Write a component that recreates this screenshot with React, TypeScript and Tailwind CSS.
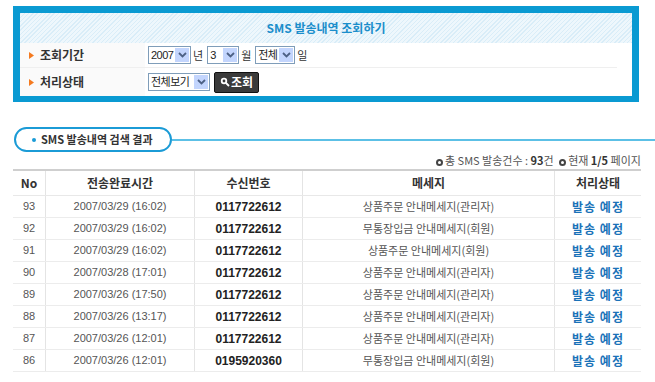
import React from "react";

const rows = [
  ["93", "2007/03/29 (16:02)", "0117722612", "상품주문 안내메세지(관리자)"],
  ["92", "2007/03/29 (16:02)", "0117722612", "무통장입금 안내메세지(회원)"],
  ["91", "2007/03/29 (16:02)", "0117722612", "상품주문 안내메세지(회원)"],
  ["90", "2007/03/28 (17:01)", "0117722612", "상품주문 안내메세지(관리자)"],
  ["89", "2007/03/26 (17:50)", "0117722612", "상품주문 안내메세지(관리자)"],
  ["88", "2007/03/26 (13:17)", "0117722612", "상품주문 안내메세지(관리자)"],
  ["87", "2007/03/26 (12:01)", "0117722612", "상품주문 안내메세지(관리자)"],
  ["86", "2007/03/26 (12:01)", "0195920360", "무통장입금 안내메세지(회원)"],
];

function Select({ value, w }: { value: string; w: string }) {
  return (
    <div className={`flex h-[18px] items-stretch border border-[#7f9db9] bg-white ${w}`}>
      <span
        className="min-w-0 flex-1 whitespace-nowrap pl-[2px] text-[11px] leading-[16px] tracking-[-0.5px] text-[#222]"
        style={{ fontFamily: '"Liberation Sans", "Noto Sans CJK KR", sans-serif' }}
      >
        {value}
      </span>
      <span className="m-[1px] flex w-[14px] shrink-0 items-center justify-center bg-[#c3d5fd]">
        <svg width="9" height="6" viewBox="0 0 9 6">
          <path d="M1 1 L4.5 4.5 L8 1" fill="none" stroke="#4d6185" strokeWidth="1.8" />
        </svg>
      </span>
    </div>
  );
}

function Bullet() {
  return (
    <svg width="5" height="7" viewBox="0 0 5 7" className="mr-[6px]">
      <path d="M0 0 L5 3.5 L0 7 Z" fill="#f47a20" />
    </svg>
  );
}

function Ring() {
  return <span className="mr-[2px] inline-block h-[7px] w-[7px] rounded-full border-2 border-[#444] align-middle" />;
}

export default function App() {
  const font = { fontFamily: '"Noto Sans CJK KR", "Liberation Sans", sans-serif' };
  const num = { fontFamily: '"Liberation Sans", sans-serif' };
  return (
    <div className="h-[382px] w-[655px] overflow-hidden bg-white" style={font}>
      {/* search box */}
      <div className="ml-[13px] mt-[6px] w-[626px] border-[7px] border-b-[6px] border-[#0a9ad2] bg-white">
        <div className="flex h-[30px] items-center justify-center bg-[repeating-linear-gradient(135deg,#d9edf8_0px,#d9edf8_1px,#eef7fc_1px,#eef7fc_3px)]">
          <span className="text-[12px] font-bold text-[#1b8ecb]">SMS 발송내역 조회하기</span>
        </div>
        <div className="mr-[15px] flex h-[25px] border-b border-[#efefef]">
          <div className="flex w-[125px] items-center bg-[#fafafa] pl-[9px] text-[12px] font-bold text-[#333]">
            <Bullet />조회기간
          </div>
          <div className="flex items-center gap-[2px] pl-[3px] text-[11px] text-[#333]">
            <Select value="2007" w="w-[43px]" />
            <span className="mr-[2px]">년</span>
            <Select value="3" w="w-[32px]" />
            <span className="mr-[2px]">월</span>
            <Select value="전체" w="w-[40px]" />
            <span>일</span>
          </div>
        </div>
        <div className="flex h-[28px]">
          <div className="flex w-[125px] items-center bg-[#fafafa] pl-[9px] text-[12px] font-bold text-[#333]">
            <Bullet />처리상태
          </div>
          <div className="flex items-center gap-[4px] pl-[3px]">
            <Select value="전체보기" w="w-[62px]" />
            <button className="flex h-[21px] items-center gap-[1px] rounded-[2px] border border-[#111] bg-[#3a3a3a] px-[5px] text-[12px] font-bold text-white">
              <svg width="10" height="10" viewBox="0 0 10 10">
                <circle cx="4" cy="4" r="3.2" fill="#fff" />
                <circle cx="4" cy="4" r="1.4" fill="#3a3a3a" />
                <path d="M6 6 L9 9" stroke="#fff" strokeWidth="1.8" />
              </svg>
              조회
            </button>
          </div>
        </div>
      </div>

      {/* section title */}
      <div className="ml-[14px] mt-[25px] flex items-center">
        <div className="flex h-[25px] w-[158px] items-center rounded-full border-2 border-[#1b9bd6] pl-[16px] text-[11px] font-bold text-[#333]">
          <span className="mr-[5px] inline-block h-[4px] w-[4px] rounded-full bg-[#1b9bd6]" />
          SMS 발송내역 검색 결과
        </div>
        <div className="h-[2px] flex-1 bg-[#5cc0e6]" />
      </div>

      {/* stats */}
      <div className="mt-[1px] w-[641px] overflow-hidden">
        <div className="ml-[436px] whitespace-nowrap text-[11px] leading-[14px] text-[#555]">
          <Ring />총 SMS 발송건수 : <b className="text-[#333]">93</b>건 <span className="ml-[3px]" />
          <Ring />현재 <b className="text-[#333]">1/5</b> 페이지
        </div>
      </div>

      {/* table */}
      <div className="ml-[13px] mt-[2px] w-[628px]">
        <div className="flex h-[27px] border-b border-t-2 border-b-[#e8e8e8] border-t-[#cfcfcf] text-[12px] font-bold text-[#333]">
          <div className="flex w-[33px] items-center justify-center border-r border-[#e4e4e4]">No</div>
          <div className="flex w-[149px] items-center justify-center border-r border-[#e4e4e4]">전송완료시간</div>
          <div className="flex w-[108px] items-center justify-center border-r border-[#e4e4e4]">수신번호</div>
          <div className="flex w-[252px] items-center justify-center border-r border-[#e4e4e4]">메세지</div>
          <div className="flex flex-1 items-center justify-center">처리상태</div>
        </div>
        {rows.map((r) => (
          <div key={r[0]} className="flex h-[22px] border-b border-[#ececec] text-[11px] text-[#555]">
            <div className="flex w-[33px] items-center justify-center border-r border-[#e4e4e4]" style={num}>{r[0]}</div>
            <div className="flex w-[149px] items-center justify-center border-r border-[#e4e4e4]" style={num}>{r[1]}</div>
            <div className="flex w-[108px] items-center justify-center border-r border-[#e4e4e4] text-[12px] font-bold text-[#222]" style={num}>{r[2]}</div>
            <div className="flex w-[252px] items-center justify-center border-r border-[#e4e4e4] text-[11px]">{r[3]}</div>
            <div className="flex flex-1 items-center justify-center text-[12px] font-bold tracking-[1px] text-[#1a72b8]">발송 예정</div>
          </div>
        ))}
      </div>
    </div>
  );
}
